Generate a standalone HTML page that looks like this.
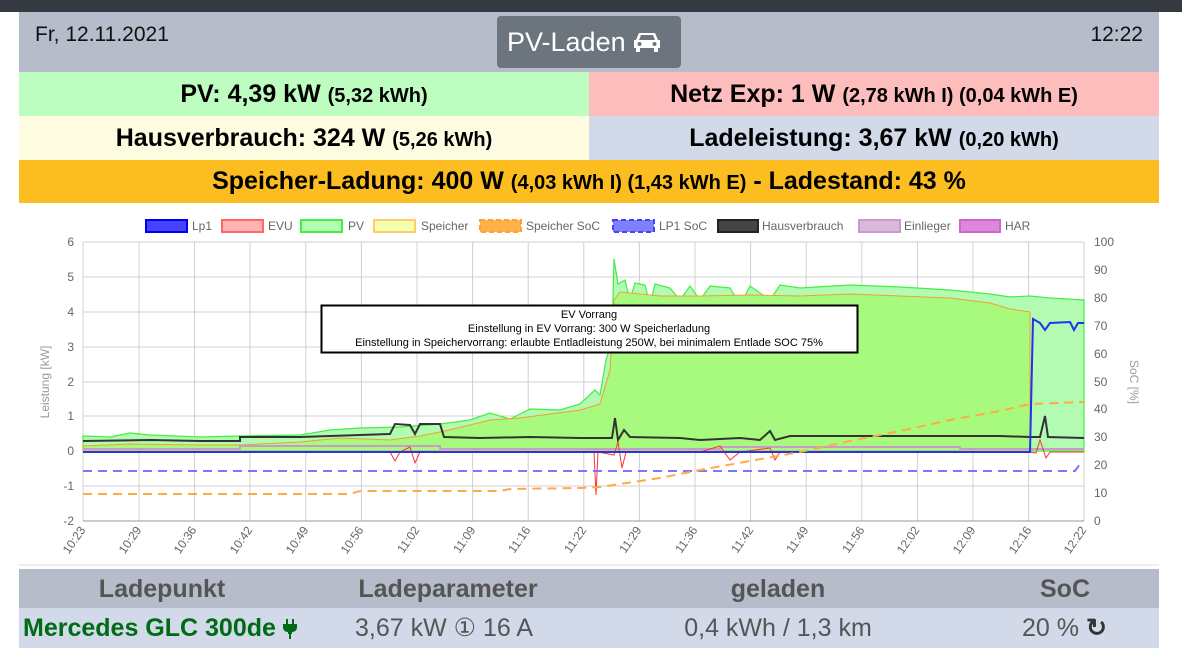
<!DOCTYPE html>
<html><head><meta charset="utf-8"><style>
*{margin:0;padding:0;box-sizing:border-box}
body{width:1182px;height:661px;background:#fff;font-family:"Liberation Sans",Arial,sans-serif;position:relative;overflow:hidden}
.top{position:absolute;left:0;top:0;width:1182px;height:12px;background:#343a40}
.hdr{position:absolute;left:19px;top:12px;width:1140px;height:60px;background:#b6bcc9}
.date{position:absolute;left:16px;top:11px;font-size:21px;color:#111}
.time{position:absolute;right:16px;top:11px;font-size:21px;color:#111}
.btn{position:absolute;left:478px;top:4px;width:184px;height:52px;background:#6c757d;border-radius:4px;color:#fff;font-size:27px;line-height:52px;padding-left:10px;white-space:nowrap}
.cell{position:absolute;height:44px;text-align:center;font-weight:bold;font-size:25px;line-height:44px;color:#000;white-space:nowrap}
.cell small{font-size:20px}
.th{position:absolute;top:569px;height:39px;left:19px;width:1140px;background:#b6bcc9}
.tr{position:absolute;top:608px;height:40px;left:19px;width:1140px;background:#d2daea}
.t{position:absolute;font-size:25px;line-height:40px;color:#555;white-space:nowrap}
</style></head><body>
<div class="top"></div>
<div class="hdr"><div class="date">Fr, 12.11.2021</div>
<div class="btn">PV-Laden <svg width="28" height="22" viewBox="0 0 28 22" style="vertical-align:-2px"><path d="M6 2h16l3 7h2v8h-2v4h-4v-4H7v4H3v-4H1V9h2z" fill="#fff"/><path d="M8 4h12l2 5H6z" fill="#6c757d"/><circle cx="6.5" cy="13" r="2" fill="#6c757d"/><circle cx="21.5" cy="13" r="2" fill="#6c757d"/></svg></div>
<div class="time">12:22</div></div>
<div class="cell" style="left:19px;top:72px;width:570px;background:#bdfdbf">PV: 4,39 kW <small>(5,32 kWh)</small></div>
<div class="cell" style="left:589px;top:72px;width:570px;background:#febdbd">Netz Exp: 1 W <small>(2,78 kWh I) (0,04 kWh E)</small></div>
<div class="cell" style="left:19px;top:116px;width:570px;background:#fefce0">Hausverbrauch: 324 W <small>(5,26 kWh)</small></div>
<div class="cell" style="left:589px;top:116px;width:570px;background:#d2daea">Ladeleistung: 3,67 kW <small>(0,20 kWh)</small></div>
<div class="cell" style="left:19px;top:160px;width:1140px;height:43px;line-height:43px;background:#fbbd1f">Speicher-Ladung: 400 W <small>(4,03 kWh I) (1,43 kWh E)</small> - Ladestand: 43 %</div>

<svg style="position:absolute;left:0;top:203px" width="1182" height="366" viewBox="0 203 1182 366" font-family="Liberation Sans,Arial,sans-serif">
<g font-size="12" fill="#666">
<rect x="146" y="220" width="41" height="12" fill="#4444ff" stroke="#0000ee" stroke-width="2"/><text x="192" y="230">Lp1</text>
<rect x="222" y="220" width="41" height="12" fill="#ffb3b3" stroke="#ff6666" stroke-width="2"/><text x="268" y="230">EVU</text>
<rect x="301" y="220" width="41" height="12" fill="#b3ffb3" stroke="#44ee44" stroke-width="2"/><text x="348" y="230">PV</text>
<rect x="374" y="220" width="41" height="12" fill="#f4ffb0" stroke="#ffcc66" stroke-width="2"/><text x="421" y="230">Speicher</text>
<rect x="480" y="220" width="41" height="12" fill="#ffb04a" stroke="#ffa030" stroke-width="2" stroke-dasharray="5,3"/><text x="526" y="230">Speicher SoC</text>
<rect x="613" y="220" width="41" height="12" fill="#8080ff" stroke="#4444ff" stroke-width="2" stroke-dasharray="5,3"/><text x="659" y="230">LP1 SoC</text>
<rect x="718" y="220" width="40" height="12" fill="#444" stroke="#222" stroke-width="2"/><text x="762" y="230">Hausverbrauch</text>
<rect x="859" y="220" width="41" height="12" fill="#dab8dc" stroke="#c99acc" stroke-width="2"/><text x="904" y="230">Einlieger</text>
<rect x="960" y="220" width="40" height="12" fill="#dd88dd" stroke="#cc66cc" stroke-width="2"/><text x="1005" y="230">HAR</text>
</g>
<g stroke="#d0d0d0" stroke-width="1">
<line x1="83" y1="242" x2="1084" y2="242"/><line x1="83" y1="277" x2="1084" y2="277"/><line x1="83" y1="312" x2="1084" y2="312"/><line x1="83" y1="347" x2="1084" y2="347"/><line x1="83" y1="382" x2="1084" y2="382"/><line x1="83" y1="416" x2="1084" y2="416"/><line x1="83" y1="451" x2="1084" y2="451"/><line x1="83" y1="486" x2="1084" y2="486"/>
</g>
<g stroke="#d0d0d0">
<line x1="83" y1="242" x2="83" y2="521"/><line x1="139" y1="242" x2="139" y2="521"/><line x1="194.6" y1="242" x2="194.6" y2="521"/><line x1="250" y1="242" x2="250" y2="521"/><line x1="305.8" y1="242" x2="305.8" y2="521"/><line x1="361.4" y1="242" x2="361.4" y2="521"/><line x1="417" y1="242" x2="417" y2="521"/><line x1="472.6" y1="242" x2="472.6" y2="521"/><line x1="528.2" y1="242" x2="528.2" y2="521"/><line x1="583.8" y1="242" x2="583.8" y2="521"/><line x1="639.4" y1="242" x2="639.4" y2="521"/><line x1="695" y1="242" x2="695" y2="521"/><line x1="750.6" y1="242" x2="750.6" y2="521"/><line x1="806.2" y1="242" x2="806.2" y2="521"/><line x1="861.8" y1="242" x2="861.8" y2="521"/><line x1="917.4" y1="242" x2="917.4" y2="521"/><line x1="973" y1="242" x2="973" y2="521"/><line x1="1028.6" y1="242" x2="1028.6" y2="521"/><line x1="1084" y1="242" x2="1084" y2="521"/>
</g>
<line x1="83" y1="521" x2="1084" y2="521" stroke="#999"/>
<path d="M83 436L110 437L130 433L150 435L200 437L240 436L300 435L330 430L360 428L400 427L440 424L470 420L490 413L510 419L530 409L560 410L580 404L595 390L600 395L606 360L612 340L614 259L618 284L625 280L630 300L635 283L645 285L650 305L655 284L670 288L680 300L690 286L700 300L710 286L730 288L740 305L750 286L770 300L780 285L800 288L850 285L900 287L950 290L990 294L1010 297L1030 296L1050 298L1084 300L1084 451L83 451Z" fill="#b3fbb3" stroke="#44ee44" stroke-width="1.2"/>
<path d="M83 446L130 444L200 445L240 445L300 442L340 438L390 440L420 436L445 431L470 425L490 420L520 418L550 414L580 410L600 404L610 370L614 300L620 292L640 294L660 296L700 296L750 295L800 296L850 294L900 296L950 298L990 303L1010 309L1030 312L1030 451L83 451Z" fill="#a8fa7e" stroke="#f0a030" stroke-width="1"/>
<path d="M83 449L240 449L240 446L440 446L440 449L720 449L720 447L960 447L960 449L1084 449" fill="none" stroke="#c99acc" stroke-width="2"/>
<path d="M83 452L390 452L395 461L400 452L410 447L415 463L420 452L580 452L594 452L596 495L598 452L614 455L618 442L622 468L626 452L660 452L700 452L720 446L730 460L740 452L770 448L775 460L780 452L1030 452L1036 453L1040 440L1046 458L1050 452L1084 452" fill="none" stroke="#ff3333" stroke-width="1"/>
<path d="M83 441L150 440L200 441L240 441L240 437L300 437L330 436L360 435L390 434L395 424L410 425L415 434L420 424L440 424L444 437L480 438L530 437L580 438L612 438L615 418L618 440L624 430L630 437L680 438L700 440L740 438L760 440L770 431L775 440L790 436L850 436L920 436L1000 436L1030 437L1040 437L1045 416L1048 437L1084 438" fill="none" stroke="#333" stroke-width="2"/>
<path d="M83 452L1030 452L1033 319L1040 323L1045 330L1050 323L1070 322L1074 330L1078 323L1084 323" fill="none" stroke="#2233ee" stroke-width="2"/>
<path d="M83 471L1075 471L1080 464" fill="none" stroke="#7777ff" stroke-width="2" stroke-dasharray="9,6"/>
<path d="M83 494L350 494L360 491L500 491L510 489L580 488L600 487L660 478L700 470L750 461L800 452L850 441L900 431L950 420L1000 411L1030 404L1084 402" fill="none" stroke="#ffaa44" stroke-width="2" stroke-dasharray="9,6"/>
<rect x="321.5" y="305.5" width="536" height="47" fill="#fff" stroke="#000" stroke-width="2"/>
<g font-size="11" fill="#000" text-anchor="middle"><text x="589" y="318">EV Vorrang</text><text x="589" y="332">Einstellung in EV Vorrang: 300 W Speicherladung</text><text x="589" y="346">Einstellung in Speichervorrang: erlaubte Entladleistung 250W,  bei minimalem Entlade SOC 75%</text></g>
<g font-size="12" fill="#666" text-anchor="end">
<text x="74" y="246">6</text><text x="74" y="281">5</text><text x="74" y="316">4</text><text x="74" y="351">3</text><text x="74" y="386">2</text><text x="74" y="420">1</text><text x="74" y="455">0</text><text x="74" y="490">-1</text><text x="74" y="525">-2</text>
</g>
<g font-size="12" fill="#666">
<text x="1094" y="246">100</text><text x="1094" y="274">90</text><text x="1094" y="302">80</text><text x="1094" y="330">70</text><text x="1094" y="358">60</text><text x="1094" y="386">50</text><text x="1094" y="413">40</text><text x="1094" y="441">30</text><text x="1094" y="469">20</text><text x="1094" y="497">10</text><text x="1094" y="525">0</text>
</g>
<text transform="translate(49,382) rotate(-90)" font-size="12" fill="#999" text-anchor="middle">Leistung [kW]</text>
<text transform="translate(1130,382) rotate(90)" font-size="12" fill="#999" text-anchor="middle">SoC [%]</text>
<g font-size="12" fill="#666" text-anchor="end">
<text transform="translate(86,530) rotate(-55)">10:23</text><text transform="translate(142,530) rotate(-55)">10:29</text><text transform="translate(197,530) rotate(-55)">10:36</text><text transform="translate(253,530) rotate(-55)">10:42</text><text transform="translate(309,530) rotate(-55)">10:49</text><text transform="translate(364,530) rotate(-55)">10:56</text><text transform="translate(420,530) rotate(-55)">11:02</text><text transform="translate(476,530) rotate(-55)">11:09</text><text transform="translate(531,530) rotate(-55)">11:16</text><text transform="translate(587,530) rotate(-55)">11:22</text><text transform="translate(642,530) rotate(-55)">11:29</text><text transform="translate(698,530) rotate(-55)">11:36</text><text transform="translate(754,530) rotate(-55)">11:42</text><text transform="translate(809,530) rotate(-55)">11:49</text><text transform="translate(865,530) rotate(-55)">11:56</text><text transform="translate(920,530) rotate(-55)">12:02</text><text transform="translate(976,530) rotate(-55)">12:09</text><text transform="translate(1032,530) rotate(-55)">12:16</text><text transform="translate(1087,530) rotate(-55)">12:22</text>
</g>
<line x1="19" y1="565" x2="1159" y2="565" stroke="#ddd"/>
</svg>

<div class="th">
<div class="t" style="left:0;width:286px;text-align:center;font-weight:bold">Ladepunkt</div>
<div class="t" style="left:286px;width:286px;text-align:center;font-weight:bold">Ladeparameter</div>
<div class="t" style="left:572px;width:374px;text-align:center;font-weight:bold">geladen</div>
<div class="t" style="left:946px;width:200px;text-align:center;font-weight:bold">SoC</div>
</div>
<div class="tr">
<div class="t" style="left:4px;color:#006a14;font-weight:bold">Mercedes GLC 300de <svg width="14" height="20" viewBox="0 0 14 20" style="vertical-align:-3px"><path d="M3 0h2v5H3zM9 0h2v5H9zM0 5h14v3c0 3-2 5-5 5v2H5v-2c-3 0-5-2-5-5z M6 15h2v5H6z" fill="#006a14"/></svg></div>
<div class="t" style="left:336px">3,67 kW ① 16 A</div>
<div class="t" style="left:572px;width:374px;text-align:center">0,4 kWh / 1,3 km</div>
<div class="t" style="left:1003px">20 % <b style="color:#333">↻</b></div>
</div>
</body></html>
